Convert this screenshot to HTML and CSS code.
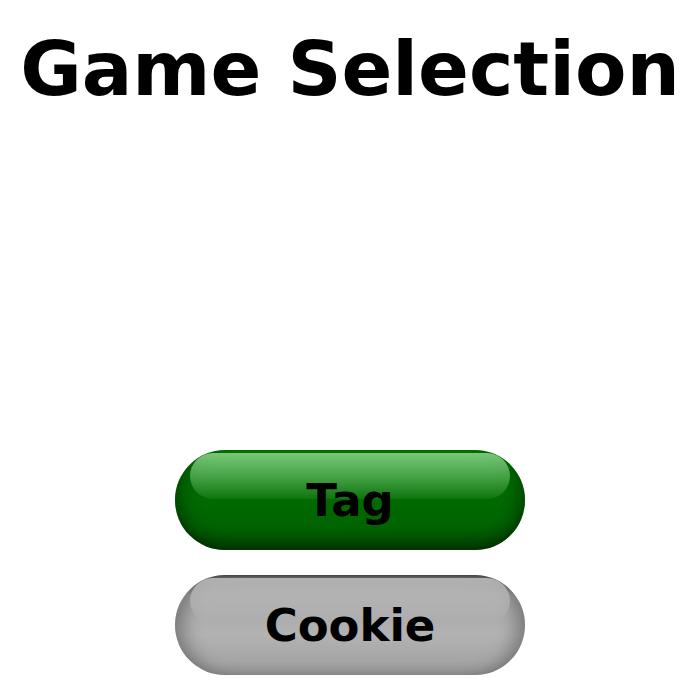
FILE: index.html
```html
<!DOCTYPE html>
<html>
<head>
<meta charset="utf-8">
<link rel="stylesheet" href="styles.css">
</head>
<body>
<div class="page">
  <h1 class="title">Game Selection</h1>
  <div class="menu">
    <div class="pill pill-green">Tag</div>
    <div class="pill pill-gray">Cookie</div>
  </div>
</div>
</body>
</html>
```
FILE: styles.css
```css
html, body {
  margin: 0;
  padding: 0;
  background: #ffffff;
}
.page {
  width: 700px;
  height: 700px;
  display: flex;
  flex-direction: column;
  align-items: center;
  justify-content: space-between;
  box-sizing: border-box;
  padding: 25px 0 25px;
  font-family: "DejaVu Sans", sans-serif;
  overflow: hidden;
}
.title {
  margin: 0;
  font-size: 75px;
  font-weight: bold;
  line-height: normal;
  color: #000;
  white-space: nowrap;
}
.menu {
  display: flex;
  flex-direction: column;
  gap: 25px;
}
.pill {
  position: relative;
  width: 350px;
  height: 100px;
  border-radius: 50px;
  display: flex;
  align-items: center;
  justify-content: center;
  font-size: 45px;
  font-weight: bold;
  color: #000;
  overflow: hidden;
  isolation: isolate;
}
.pill::before {
  content: "";
  position: absolute;
  left: 15px;
  right: 15px;
  top: 3px;
  height: 46px;
  border-radius: 23px;
  z-index: -1;
}
.pill-green {
  background: linear-gradient(to bottom, #008000 0px, #007a00 3px, #006c00 45%, #006400 75%, #004a00 100%);
  box-shadow: inset 14px 0 18px -8px rgba(0,30,0,0.45), inset -14px 0 18px -8px rgba(0,30,0,0.45), inset 0 -10px 14px -6px rgba(0,30,0,0.5);
}
.pill-green::before {
  background: linear-gradient(to bottom, rgba(140,215,140,0.85) 0%, rgba(110,190,110,0.65) 50%, rgba(70,150,70,0.2) 100%);
}
.pill-gray {
  background: linear-gradient(to bottom, #4c4c4c 0px, #6a6a6a 3px, #a8a8a8 20%, #b2b2b2 60%, #a6a6a6 85%, #989898 100%);
  box-shadow: inset 16px 0 18px -8px rgba(40,40,40,0.4), inset -16px 0 18px -8px rgba(40,40,40,0.4);
}
.pill-gray::before {
  background: linear-gradient(to bottom, rgba(185,185,185,0.9) 0%, rgba(180,180,180,0.7) 60%, rgba(170,170,170,0.25) 100%);
}
```
